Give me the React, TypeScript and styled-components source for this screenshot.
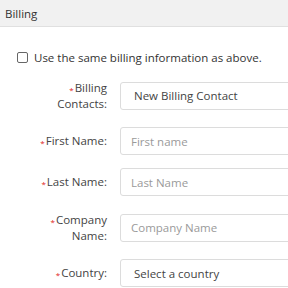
import React from "react";
import styled, { createGlobalStyle } from "styled-components";

const Global = createGlobalStyle`
  html, body { margin: 0; padding: 0; background: #fff; overflow: hidden; }
  body { font-family: "Open Sans", "Liberation Sans", sans-serif; color: #333; }
`;

const Panel = styled.div`
  width: 288px;
`;

const Header = styled.div`
  height: 26px;
  display: flex;
  align-items: center;
  padding-left: 5px;
  background: #f1f1f1;
  border-bottom: 1px solid #e0e0e0;
  font-size: 11.5px;
  color: #333;
`;

const Body = styled.div`
  padding-top: 21px;
`;

const CheckRow = styled.label`
  display: flex;
  align-items: center;
  height: 18px;
  padding-left: 17px;
  gap: 6px;
  font-size: 11.5px;
  color: #333;
  margin-bottom: 11px;
`;

const Box = styled.span`
  width: 9px;
  height: 9px;
  border: 1px solid #666;
  border-radius: 2px;
  background: #fff;
`;

const Rows = styled.div`
  display: flex;
  flex-direction: column;
  gap: 13px;
`;

const Row = styled.div`
  display: flex;
  align-items: center;
  gap: 13px;
`;

const Label = styled.div`
  width: 107px;
  flex: none;
  text-align: right;
  font-size: 11.5px;
  line-height: 16px;
  padding: 2.5px 0;
  color: #444;
`;

const Req = styled.span`
  color: #e02020;
  font-size: 8px;
  line-height: 0;
  position: relative;
  top: 1px;
  margin-right: 1px;
`;

const Field = styled.input`
  flex: none;
  width: 220px;
  height: 28px;
  box-sizing: border-box;
  border: 1px solid #dcdcdc;
  border-radius: 3px;
  padding: 0 10px;
  font-family: inherit;
  font-size: 11.5px;
  color: #555;
  outline: none;
  &::placeholder { color: #9a9a9a; }
`;

const Select = styled.div`
  flex: none;
  width: 220px;
  height: 28px;
  box-sizing: border-box;
  border: 1px solid #dcdcdc;
  border-radius: 3px;
  padding: 0 13px;
  display: flex;
  align-items: center;
  font-size: 11.5px;
  color: #444;
`;

type F = { label: React.ReactNode; kind: "select" | "input"; text: string };

const fields: F[] = [
  { label: <>Billing<br />Contacts:</>, kind: "select", text: "New Billing Contact" },
  { label: "First Name:", kind: "input", text: "First name" },
  { label: "Last Name:", kind: "input", text: "Last Name" },
  { label: <>Company<br />Name:</>, kind: "input", text: "Company Name" },
  { label: "Country:", kind: "select", text: "Select a country" },
];

export default function App() {
  return (
    <Panel>
      <Global />
      <Header>Billing</Header>
      <Body>
        <CheckRow>
          <Box />
          Use the same billing information as above.
        </CheckRow>
        <Rows>
          {fields.map((f, i) => (
            <Row key={i}>
              <Label>
                <Req>*</Req>
                {f.label}
              </Label>
              {f.kind === "select" ? (
                <Select>{f.text}</Select>
              ) : (
                <Field placeholder={f.text} />
              )}
            </Row>
          ))}
        </Rows>
      </Body>
    </Panel>
  );
}
